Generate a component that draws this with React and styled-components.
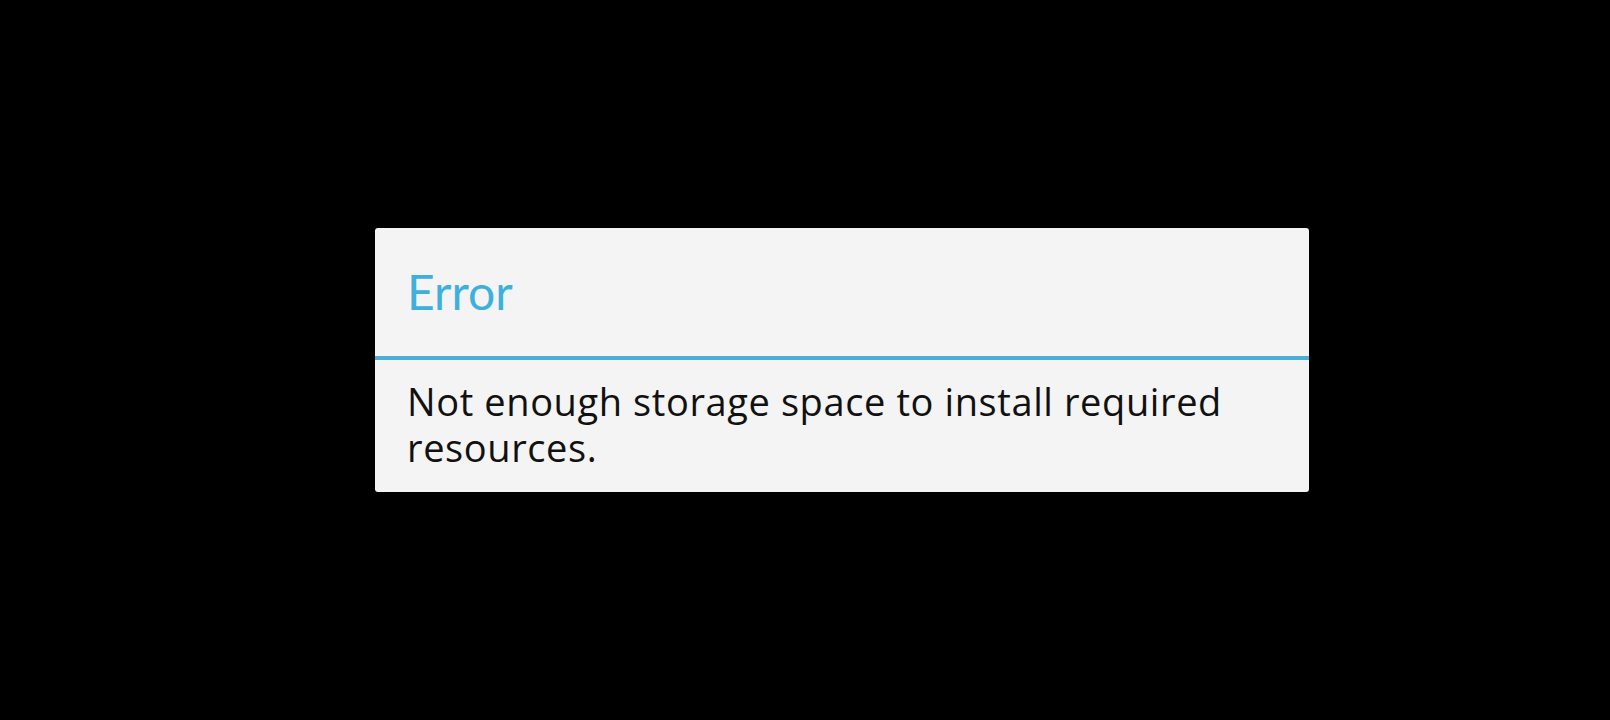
import React from 'react';
import styled, { createGlobalStyle } from 'styled-components';

const GlobalStyle = createGlobalStyle`
  html, body {
    margin: 0;
    padding: 0;
    background: #000;
  }
  body {
    font-family: 'Open Sans', sans-serif;
  }
`;

const Screen = styled.div`
  width: 1610px;
  height: 720px;
  background: #000;
  display: flex;
  align-items: center;
  padding-left: 375px;
  box-sizing: border-box;
`;

const Dialog = styled.div`
  width: 934px;
  height: 264px;
  background: #f4f4f4;
  border-radius: 3px;
  display: flex;
  flex-direction: column;
  overflow: hidden;
`;

const Header = styled.div`
  height: 132px;
  padding: 0 32px;
  display: flex;
  align-items: center;
  border-bottom: 4px solid #48b0d6;
  box-sizing: border-box;
`;

const Title = styled.h1`
  margin: 0;
  font-family: Lato, 'Open Sans', sans-serif;
  font-size: 48px;
  font-weight: 400;
  color: #3eb0dc;
  line-height: 1;
`;

const Body = styled.div`
  padding: 18px 32px 0;
`;

const Message = styled.p`
  margin: 0;
  font-size: 38px;
  line-height: 46px;
  letter-spacing: 0.6px;
  color: #111;
  max-width: 860px;
`;

export default function App() {
  return (
    <>
      <GlobalStyle />
      <Screen>
        <Dialog>
          <Header>
            <Title>Error</Title>
          </Header>
          <Body>
            <Message>Not enough storage space to install required resources.</Message>
          </Body>
        </Dialog>
      </Screen>
    </>
  );
}
